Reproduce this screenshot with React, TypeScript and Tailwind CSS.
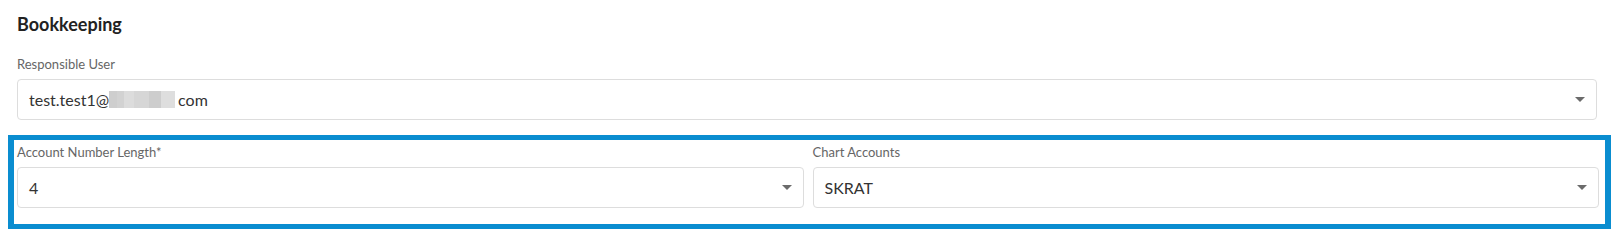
import React from "react";

const blurBlocks = [
  { w: 8, c: "bg-[#cecece]" },
  { w: 7, c: "bg-[#d2d2d2]" },
  { w: 10, c: "bg-[#dcdcdc]" },
  { w: 15, c: "bg-[#d6d6d6]" },
  { w: 12, c: "bg-[#cdcdcd]" },
  { w: 14, c: "bg-[#dedede]" },
];

function Caret() {
  return (
    <svg width="10" height="5" viewBox="0 0 10 5" className="shrink-0">
      <path d="M0 0 L10 0 L5 5 Z" fill="#6b6b6b" />
    </svg>
  );
}

interface SelectFieldProps {
  label: string;
  children: React.ReactNode;
}

function SelectField({ label, children }: SelectFieldProps) {
  return (
    <div className="flex flex-col">
      <div className="text-[13px] leading-[16px] text-[#666666] mb-[7px]">{label}</div>
      <div className="h-[41px] border border-[#dddddd] rounded-[4px] bg-white flex items-center pl-[11px] pr-[11px]">
        <div className="flex-1 flex items-center text-[16px] text-[#333333]">{children}</div>
        <Caret />
      </div>
    </div>
  );
}

export default function App() {
  return (
    <div className="w-full h-[242px] bg-white font-['Lato','Liberation_Sans',sans-serif] pt-[12px]">
      <div className="pl-[17px] pr-[24px]">
        <h2 className="text-[18px] leading-[24px] font-bold text-[#222222] mb-[20px]">Bookkeeping</h2>
        <SelectField label="Responsible User">
          <span>test.test1@</span>
          <span className="flex h-[17px] mr-[3px]">
            {blurBlocks.map((b, i) => (
              <span key={i} className={b.c} style={{ width: b.w }} />
            ))}
          </span>
          <span>com</span>
        </SelectField>
      </div>
      <div className="ml-[8px] mr-[10px] mt-[15px] border-x-[6px] border-y-[5px] border-[#0a8dd0] pt-[4px] pb-[16px] pl-[3px] pr-[6px]">
        <div className="grid grid-cols-2 gap-[9px]">
          <SelectField label="Account Number Length*">
            <span>4</span>
          </SelectField>
          <SelectField label="Chart Accounts">
            <span>SKRAT</span>
          </SelectField>
        </div>
      </div>
    </div>
  );
}
